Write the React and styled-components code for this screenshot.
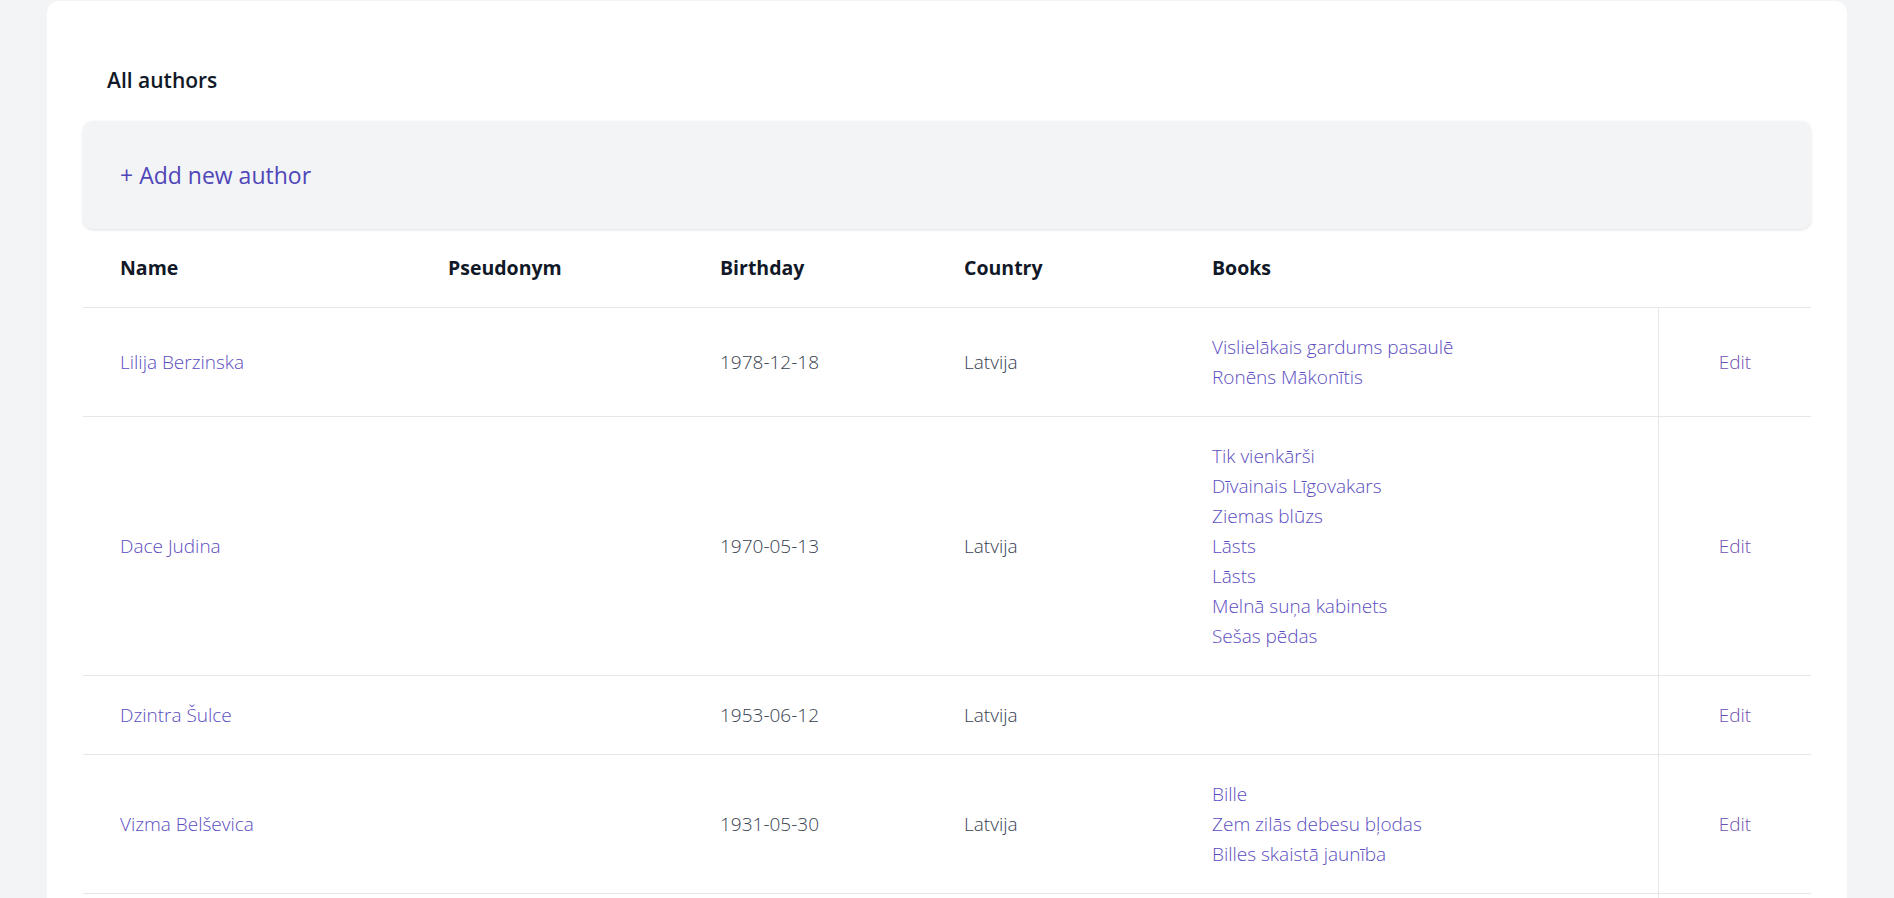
import React from "react";
import styled, { createGlobalStyle } from "styled-components";

const GlobalStyle = createGlobalStyle`
  body {
    margin: 0;
    background: #f3f4f6;
    font-family: "Open Sans", "Noto Sans", sans-serif;
  }
`;

const Page = styled.div`
  padding-top: 1px;
`;

const Card = styled.div`
  width: 1800px;
  margin: 0 auto;
  background: #ffffff;
  border-radius: 12px;
  padding: 0 36px;
  box-sizing: border-box;
`;

const Title = styled.h2`
  margin: 0;
  padding: 65px 24px 27px;
  font-size: 21px;
  line-height: 28px;
  font-weight: 600;
  color: #111827;
`;

const Toolbar = styled.div`
  background: #f3f4f6;
  border-radius: 10px;
  box-shadow: 0 1px 3px rgba(0, 0, 0, 0.12);
  padding: 40px 37px;
`;

const AddLink = styled.a`
  font-size: 23px;
  line-height: 28px;
  color: #4f46b8;
  text-decoration: none;
  cursor: pointer;
`;

const cols = "328px 272px 244px 248px 1fr 153px";

const Row = styled.div`
  display: grid;
  grid-template-columns: ${cols};
  border-bottom: 1px solid #e5e7eb;
`;

const HeadCell = styled.div`
  padding: 24px 37px;
  font-size: 19.5px;
  line-height: 30px;
  font-weight: 700;
  color: #111827;
`;

const Cell = styled.div`
  padding: 24px 37px;
  font-size: 19px;
  line-height: 30px;
  font-weight: 300;
  color: ${(p) => (p.$link ? "#5b4dc0" : "#374151")};
  display: flex;
  flex-direction: column;
  justify-content: center;
`;

const ActionCell = styled(Cell)`
  border-left: 1px solid #e5e7eb;
  align-items: center;
  padding: 24px 0;
  color: #7050b0;
`;

const authors = [
  {
    name: "Lilija Berzinska",
    birthday: "1978-12-18",
    country: "Latvija",
    books: ["Vislielākais gardums pasaulē", "Ronēns Mākonītis"],
  },
  {
    name: "Dace Judina",
    birthday: "1970-05-13",
    country: "Latvija",
    books: [
      "Tik vienkārši",
      "Dīvainais Līgovakars",
      "Ziemas blūzs",
      "Lāsts",
      "Lāsts",
      "Melnā suņa kabinets",
      "Sešas pēdas",
    ],
  },
  {
    name: "Dzintra Šulce",
    birthday: "1953-06-12",
    country: "Latvija",
    books: [],
  },
  {
    name: "Vizma Belševica",
    birthday: "1931-05-30",
    country: "Latvija",
    books: ["Bille", "Zem zilās debesu bļodas", "Billes skaistā jaunība"],
  },
  {
    name: "Regīna Ezera",
    birthday: "1930-12-20",
    country: "Latvija",
    books: ["Aka"],
  },
];

const App = () => {
  return (
    <Page>
      <GlobalStyle />
      <Card>
        <Title>All authors</Title>
        <Toolbar>
          <AddLink>+ Add new author</AddLink>
        </Toolbar>
        <Row>
          <HeadCell>Name</HeadCell>
          <HeadCell>Pseudonym</HeadCell>
          <HeadCell>Birthday</HeadCell>
          <HeadCell>Country</HeadCell>
          <HeadCell>Books</HeadCell>
          <HeadCell />
        </Row>
        {authors.map((a) => (
          <Row key={a.name}>
            <Cell $link>{a.name}</Cell>
            <Cell></Cell>
            <Cell>{a.birthday}</Cell>
            <Cell>{a.country}</Cell>
            <Cell $link>
              {a.books.map((b, i) => (
                <span key={i}>{b}</span>
              ))}
            </Cell>
            <ActionCell>Edit</ActionCell>
          </Row>
        ))}
      </Card>
    </Page>
  );
};

export default App;
